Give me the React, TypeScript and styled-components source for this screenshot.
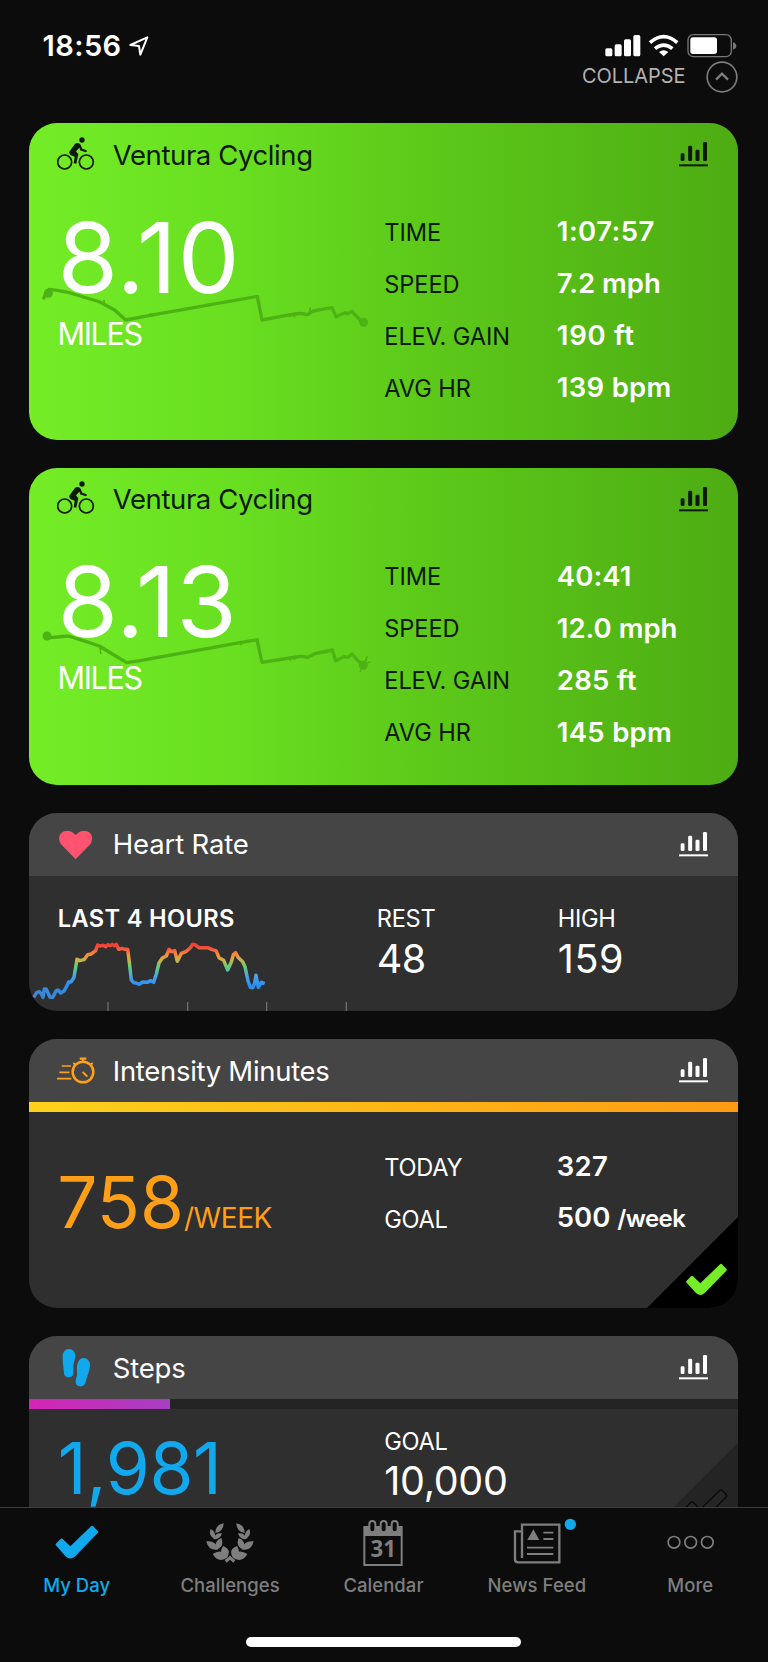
import React from 'react';
import styled, { createGlobalStyle } from 'styled-components';

const GlobalStyle = createGlobalStyle`
  * { box-sizing: border-box; }
  body {
    margin: 0;
    background: #0c0c0c;
    font-family: Inter, "Liberation Sans", sans-serif;
    color: #fff;
  }
`;

const Screen = styled.div`
  width: 768px;
  height: 1662px;
  display: flex;
  flex-direction: column;
  overflow: hidden;
  background: #0c0c0c;
`;

const StatusBar = styled.header`
  height: 61px;
  flex: none;
  display: flex;
  justify-content: space-between;
  align-items: flex-end;
  padding: 0 31px 0 42.5px;
`;

const Clock = styled.div`
  display: flex;
  align-items: center;
  gap: 7.5px;
  height: 31px;
  font-size: 29px;
  font-weight: 600;
  letter-spacing: 0.45px;
  line-height: 31px;
`;

const Indicators = styled.div`
  display: flex;
  height: 31px;
  align-items: center;
`;

const CollapseRow = styled.button`
  flex: none;
  height: 31px;
  display: flex;
  justify-content: flex-end;
  align-items: center;
  gap: 20px;
  padding: 0 30.5px 0 0;
  border: 0;
  background: none;
  color: #b2b2b2;
  font: 400 20px/31px Inter, "Liberation Sans", sans-serif;
  letter-spacing: -0.05px;
`;

const Feed = styled.main`
  flex: 1;
  min-height: 0;
  overflow: hidden;
  display: flex;
  flex-direction: column;
  gap: 28.2px;
  padding: 31px 29.6px 0 29.3px;
`;

const Card = styled.section<{ $height: number; $green?: boolean }>`
  position: relative;
  flex: none;
  height: ${(p) => p.$height}px;
  overflow: hidden;
  border-radius: 28px;
  background: ${(p) =>
    p.$green
      ? 'linear-gradient(90deg, #74ed27 0%, #68de20 30%, #5dca1a 55%, #4dac13 100%)'
      : '#2f2f2f'};
`;

const CardHeader = styled.div<{ $green?: boolean }>`
  height: 63px;
  display: flex;
  align-items: center;
  padding: 0 30px 0 27.5px;
  background: ${(p) => (p.$green ? 'transparent' : '#454545')};
  color: ${(p) => (p.$green ? '#0c1a06' : '#fff')};
`;

const IconSlot = styled.span`
  display: flex;
  width: 38px;
  height: 38px;
  margin-right: 18px;
`;

const Title = styled.h2<{ $track?: number }>`
  flex: 1;
  margin: 0;
  font-size: 27.5px;
  font-weight: 400;
  line-height: 40px;
  letter-spacing: ${(p) => p.$track ?? 0}px;
`;

const Body = styled.div<{ $top: number }>`
  display: grid;
  grid-template-columns: 355px 1fr;
  padding-top: ${(p) => p.$top}px;
`;

const Primary = styled.div<{ $top?: number; $left?: number }>`
  position: relative;
  padding: ${(p) => p.$top ?? 0}px 0 0 ${(p) => p.$left ?? 28}px;
  white-space: nowrap;
`;

const Distance = styled.div<{ $track: number }>`
  height: 98px;
  font-size: 98px;
  line-height: 98px;
  letter-spacing: ${(p) => p.$track}px;
`;

const Unit = styled.div`
  height: 54px;
  font-size: 30.5px;
  font-weight: 400;
  line-height: 54px;
  letter-spacing: -1.35px;
`;

const Total = styled.div<{ $color: string; $track: number }>`
  color: ${(p) => p.$color};
  font-size: 71px;
  line-height: 72px;
  height: 72px;
  letter-spacing: ${(p) => p.$track}px;
`;

const TotalUnit = styled.span`
  font-size: 28px;
  font-weight: 400;
  letter-spacing: -0.4px;
`;

const StatList = styled.dl`
  margin: 0;
`;

const Stat = styled.div`
  display: grid;
  grid-template-columns: 172.5px 1fr;
  height: 52px;
  align-items: center;
  white-space: nowrap;
`;

const Label = styled.dt<{ $dark?: boolean }>`
  padding-top: 1px;
  font-size: 23.6px;
  font-weight: 400;
  color: ${(p) => (p.$dark ? '#0b1a05' : '#fff')};
  letter-spacing: ${(p) => (p.$dark ? -0.1 : -0.3)}px;
  line-height: 28px;
`;

const Value = styled.dd<{ $track?: number }>`
  margin: -2px 0 0;
  font-size: 27.5px;
  font-weight: 600;
  line-height: 32px;
  letter-spacing: ${(p) => p.$track ?? 0}px;
`;

const Small = styled.span`
  font-size: 24px;
  letter-spacing: -0.6px;
`;

const HeartBody = styled.div`
  position: relative;
  display: grid;
  grid-template-columns: 347.5px 181px 1fr;
  padding-top: 29px;
`;

const Caption = styled.div<{ $bold?: boolean; $track?: number }>`
  font-size: 23.6px;
  font-weight: ${(p) => (p.$bold ? 600 : 400)};
  line-height: 28px;
  letter-spacing: ${(p) => p.$track ?? -0.3}px;
  padding-left: ${(p) => (p.$bold ? 28.5 : 0)}px;
`;

const Reading = styled.div<{ $track?: number; $top?: number }>`
  padding-top: ${(p) => p.$top ?? 1}px;
  font-size: 39.5px;
  line-height: 48px;
  height: 50px;
  letter-spacing: ${(p) => p.$track ?? 0}px;
`;

const Progress = styled.div`
  height: 9.5px;
  background: #242424;
`;

const ProgressFill = styled.div<{ $gradient: string; $percent: number }>`
  width: ${(p) => p.$percent}%;
  height: 100%;
  background: linear-gradient(90deg, ${(p) => p.$gradient});
`;

const Underlay = styled.svg<{ $top: number }>`
  position: absolute;
  left: -9.3px;
  top: ${(p) => p.$top}px;
`;

const Corner = styled.svg`
  position: absolute;
  right: 0;
  bottom: 0;
`;

const TabBar = styled.nav`
  position: relative;
  flex: none;
  height: 155px;
  border-top: 1px solid #3d3d3d;
  padding-right: 1px;
  display: grid;
  grid-template-columns: repeat(5, 1fr);
  background: #0c0c0c;
`;

const Tab = styled.div<{ $active?: boolean }>`
  display: flex;
  flex-direction: column;
  align-items: center;
  color: ${(p) => (p.$active ? '#10a9ee' : '#7e7e7e')};
  font-size: 18.5px;
  font-weight: 500;
  line-height: 24px;
  letter-spacing: 0.05px;
`;

const TabIcon = styled.svg`
  width: 64px;
  height: 55px;
  margin: 9px 0 1px;
  overflow: visible;
`;

const HomeIndicator = styled.div`
  position: absolute;
  left: 246px;
  bottom: 15.5px;
  width: 275px;
  height: 9.5px;
  border-radius: 5px;
  background: #fff;
`;

const ChartIcon = () => (
  <svg width="29.5" height="25" viewBox="0 0 88.5 75" fill="currentColor">
    <rect x="5" y="34" width="11.5" height="23" rx="4" />
    <rect x="27.5" y="11" width="12" height="46" rx="4" />
    <rect x="49.5" y="23" width="12" height="34" rx="4" />
    <rect x="72" y="0" width="12" height="57" rx="4" />
    <rect x="0" y="67" width="88.5" height="6" />
  </svg>
);

const CyclistIcon = () => (
  <svg width="38" height="38" viewBox="171 408 114 114" fill="none" stroke="currentColor">
    <circle cx="194" cy="486" r="21" strokeWidth="5" />
    <circle cx="259" cy="486" r="21" strokeWidth="5" />
    <circle cx="246" cy="420" r="8" fill="currentColor" stroke="none" />
    <path d="M232 434 L239 436 L244 449 L257 453" strokeWidth="7" strokeLinejoin="round" strokeLinecap="round" />
    <path d="M207 457 L224 433 Q231 426 239 431 L241 440 L228 454 L235 463 L229 491 L221 490 L224 470 L211 465 Z" fill="currentColor" stroke="none" />
  </svg>
);

const HeartIcon = () => (
  <svg width="38" height="38" viewBox="111 78 114 114">
    <path
      d="M167 181 L126 139 C115 128 115 111 124 102 C136 91 154 93 167 108 C180 93 198 91 210 102 C219 111 219 128 208 139 Z"
      fill="#ff5370"
    />
  </svg>
);

const StopwatchIcon = () => (
  <svg width="38" height="38" viewBox="111 67 114 114" fill="none" stroke="#ff9f1a">
    <circle cx="189" cy="127" r="31" strokeWidth="7.5" />
    <path d="M179 87 H199 M189 87 V97" strokeWidth="7" />
    <path d="M160 100 L168 107 M218 100 L210 107" strokeWidth="6" />
    <path d="M188 127 L202 141" strokeWidth="6" />
    <path d="M125 109 H153 M118 128 H148 M111 147 H154" strokeWidth="5" />
  </svg>
);

const StepsIcon = () => (
  <svg width="38" height="38" viewBox="111 71 114 114" fill="#12a8ee">
    <path d="M147 71 C158 71 166 80 166 92 C166 103 160 111 160 124 L160 144 C160 152 154 156 146 156 C138 156 133 152 132 144 C131 128 127 104 128 92 C129 79 137 71 147 71 Z" />
    <path d="M192 98 C203 99 211 109 210 121 C209 137 201 152 197 170 C195 180 188 184 180 183 C171 182 166 176 167 167 C168 156 173 151 171 140 C170 131 170 123 173 114 C176 103 183 98 192 98 Z" />
  </svg>
);

const checkPath =
  'M2 51 L15 38 Q18 35 21 38 L43 59 L102 2 Q105 -1 108 2 L121 15 Q124 18 121 21 L56 88 Q43 100 30 88 L2 57 Q-1 54 2 51 Z';

const GoalCorner = ({ reached }: { reached?: boolean }) => (
  <Corner width="91" height="91" viewBox="0 0 273 273">
    <path d="M0 273 L273 0 V273 Z" fill={reached ? '#000' : '#242424'} />
    <path
      d={checkPath}
      transform="translate(117 140)"
      fill={reached ? '#75ed28' : '#262626'}
      stroke={reached ? 'none' : '#080808'}
      strokeWidth="4"
    />
  </Corner>
);

const leaf = (x1: number, y1: number, x2: number, y2: number, w: number) => {
  const mx = (x1 + x2) / 2;
  const my = (y1 + y2) / 2;
  const len = Math.hypot(x2 - x1, y2 - y1);
  const nx = (-(y2 - y1) / len) * w;
  const ny = ((x2 - x1) / len) * w;
  return `M${x1} ${y1} Q${mx + nx} ${my + ny} ${x2} ${y2} Q${mx - nx} ${my - ny} ${x1} ${y1} Z`;
};

const branch = [
  leaf(588, 624, 613, 595, 16),
  leaf(585, 642, 574, 612, 14),
  leaf(582, 642, 608, 625, 14),
  leaf(596, 674, 561, 649, 20),
  leaf(592, 674, 606, 639, 19),
  leaf(625, 697, 580, 687, 25),
  leaf(623, 698, 611, 663, 23),
].join(' ');

const LaurelIcon = () => (
  <TabIcon viewBox="536 576 192 165" fill="currentColor">
    <path d={branch} />
    <path d={branch} transform="translate(1264 0) scale(-1 1)" />
    <path d="M632 691 L637 697 L648 705 L642 713 L632 704 L622 713 L616 705 L627 697 Z" />
  </TabIcon>
);

const CalendarIcon = () => (
  <TabIcon viewBox="992 576 192 165">
    <path
      d="M1029 603 H1147 V723 H1029 Z M1035 633 V717 H1141 V633 Z"
      fill="currentColor"
      fillRule="evenodd"
    />
    {[1056, 1090, 1123].map((x) => (
      <rect key={x} x={x - 9} y="588" width="18" height="34" rx="9" fill="#0c0c0c" stroke="currentColor" strokeWidth="6" />
    ))}
    <text
      x="1089"
      y="697"
      textAnchor="middle"
      fontFamily="Open Sans, sans-serif"
      fontWeight="700"
      fontSize="67"
      letterSpacing="0"
      fill="currentColor"
    >
      31
    </text>
  </TabIcon>
);

const NewsIcon = () => (
  <TabIcon viewBox="359 576 192 165" fill="none" stroke="currentColor" strokeWidth="7">
    <path d="M410 699 V599 H522 V712 H398 Q389 712 389 703 V619 H410" />
    <path d="M444 613 L462 645 H426 Z" fill="currentColor" stroke="none" />
    <path d="M474 623 H504 M474 642 H504 M425 668 H504 M425 687 H504" strokeWidth="5.5" />
    <circle cx="555" cy="598" r="17" fill="#10a9ee" stroke="none" />
  </TabIcon>
);

const MoreIcon = () => (
  <TabIcon viewBox="819 576 192 165" fill="none" stroke="currentColor" strokeWidth="5">
    <circle cx="867" cy="652" r="17.5" />
    <circle cx="917" cy="652" r="17.5" />
    <circle cx="967" cy="652" r="17.5" />
  </TabIcon>
);

interface Ride {
  distance: string;
  track: number;
  stats: [string, string, number][];
  route: string;
  start: [number, number];
  end: [number, number];
  spikes: string;
  underlayTop: number;
}

const rides: Ride[] = [
  {
    distance: '8.10',
    track: 0.7,
    underlayTop: 67,
    start: [85, 310],
    end: [1031, 397],
    route:
      'M70 328 L80 304 L88 298 L112 301 L145 307 L190 321 L240 336 L252 343 L285 361 L317 390 L390 376 L712 319 L726 390 L800 376 L826 372 L842 370 L862 374 L880 363 L905 358 L936 353 L948 380 L975 368 L984 371 L996 364 L1014 384 L1028 397',
    spikes: 'M252 330 L253 347 M808 370 L812 382 M820 368 L824 382 M871 352 L867 376 M390 370 L398 379 M283 355 L286 363',
    stats: [
      ['TIME', '1:07:57', 0.45],
      ['SPEED', '7.2 mph', 0],
      ['ELEV. GAIN', '190 ft', 0.7],
      ['AVG HR', '139 bpm', 0.3],
    ],
  },
  {
    distance: '8.13',
    track: 0.2,
    underlayTop: -8,
    start: [81, 528],
    end: [1030, 616],
    route:
      'M81 528 L92 533 L145 528 L190 542 L238 558 L262 573 L320 608 L360 602 L660 548 L711 539 L726 607 L790 597 L842 589 L864 592 L884 581 L910 576 L937 570 L947 602 L972 590 L984 592 L996 582 L1014 602 L1030 616',
    spikes: 'M240 556 L242 582 M808 591 L812 602 M820 590 L824 600 M663 545 L664 556 M1030 616 L1042 589 M1030 610 L1052 606 M1030 616 L1020 636',
    stats: [
      ['TIME', '40:41', 0.1],
      ['SPEED', '12.0 mph', 0],
      ['ELEV. GAIN', '285 ft', 0.25],
      ['AVG HR', '145 bpm', 0.3],
    ],
  },
];

const RideCard = ({ ride }: { ride: Ride }) => (
  <Card $green $height={316.8}>
    <Underlay $top={ride.underlayTop} width="364" height="330" viewBox="0 0 1092 990" fill="none" stroke="#4db213">
      <path d={ride.route} strokeWidth="10" strokeLinejoin="round" />
      <path d={ride.spikes} strokeWidth="5" />
      <circle cx={ride.start[0]} cy={ride.start[1]} r="13.5" fill="#4db213" stroke="none" />
      <circle cx={ride.end[0]} cy={ride.end[1]} r="13.5" fill="#4db213" stroke="none" />
    </Underlay>
    <CardHeader $green>
      <IconSlot><CyclistIcon /></IconSlot>
      <Title $track={-0.4}>Ventura Cycling</Title>
      <ChartIcon />
    </CardHeader>
    <Body $top={20}>
      <Primary $top={2.5} $left={28.2}>
        <Distance $track={ride.track}>{ride.distance}</Distance>
        <Unit>MILES</Unit>
      </Primary>
      <StatList>
        {ride.stats.map(([label, value, track]) => (
          <Stat key={label}>
            <Label $dark>{label}</Label>
            <Value $track={track}>{value}</Value>
          </Stat>
        ))}
      </StatList>
    </Body>
  </Card>
);

const heartLine =
  'M41 592 L50 578 L58 575 L64 581 L69 592 L73 567 L79 568 L90 592 L98 592 L108 573 L114 570 L122 579 L132 573 L140 559 L146 546 L153 546 L162 532 L166 508 L171 478 L179 482 L192 479 L203 464 L213 462 L227 452 L233 435 L240 438 L250 436 L257 440 L263 434 L271 437 L277 433 L283 437 L289 433 L296 448 L306 445 L316 448 L323 448 L326 470 L334 540 L341 548 L348 549 L358 553 L368 546 L382 547 L393 542 L401 547 L409 522 L417 489 L427 474 L439 468 L447 448 L455 455 L464 452 L472 484 L484 460 L499 454 L511 443 L518 433 L525 434 L537 443 L563 443 L577 449 L588 452 L597 473 L611 481 L623 510 L634 486 L640 464 L647 458 L654 472 L668 485 L675 500 L684 543 L691 562 L698 563 L704 550 L708 526 L715 562 L724 547 L734 551';

export default function App() {
  return (
    <>
      <GlobalStyle />
      <Screen>
        <StatusBar>
          <Clock>
            18:56
            <svg width="20" height="20" viewBox="387 107 60 60" fill="none" stroke="#fff" strokeWidth="6" strokeLinejoin="round">
              <path d="M391 134 L442 111 L421 163 L417 137 Z" />
            </svg>
          </Clock>
          <Indicators>
            <svg width="132" height="24" viewBox="662 101 396 72">
              <g fill="#fff">
                <rect x="663" y="144" width="21" height="24" rx="5" />
                <rect x="691" y="132" width="21" height="36" rx="5" />
                <rect x="719" y="117" width="21" height="51" rx="5" />
                <rect x="747" y="104" width="21" height="64" rx="5" />
                <path d="M838 168 L824 155 Q838 145 852 155 Z" />
              </g>
              <path d="M812 145 Q838 124 864 145" fill="none" stroke="#fff" strokeWidth="11" />
              <path d="M797 127 Q838 91 879 127" fill="none" stroke="#fff" strokeWidth="11" />
              <rect x="911" y="103" width="130" height="66" rx="16" fill="none" stroke="#777" strokeWidth="4" />
              <rect x="918" y="111" width="80" height="50" rx="8" fill="#fff" />
              <path d="M1046 126 Q1056 129 1056 137 Q1056 145 1046 148 Z" fill="#777" />
            </svg>
          </Indicators>
        </StatusBar>
        <CollapseRow>
          COLLAPSE
          <svg width="32" height="32" viewBox="0 0 96 96" fill="none" stroke="#7d7d7d">
            <circle cx="48" cy="48" r="44.5" strokeWidth="5" />
            <path d="M30 56 L48 38 L66 56" strokeWidth="7" />
          </svg>
        </CollapseRow>
        <Feed>
          {rides.map((ride) => (
            <RideCard key={ride.distance} ride={ride} />
          ))}

          <Card $height={198.2}>
            <Underlay $top={-13} width="364" height="220" viewBox="0 0 1092 660" fill="none">
              <defs>
                <linearGradient id="zones" gradientUnits="userSpaceOnUse" x1="0" x2="0" y1="430" y2="595">
                  <stop offset="0" stopColor="#f23a38" />
                  <stop offset="0.08" stopColor="#f2503a" />
                  <stop offset="0.2" stopColor="#f58a3c" />
                  <stop offset="0.3" stopColor="#cdb04a" />
                  <stop offset="0.43" stopColor="#5fd07c" />
                  <stop offset="0.6" stopColor="#4da3e6" />
                  <stop offset="0.75" stopColor="#2d8ff0" />
                  <stop offset="1" stopColor="#3f86cc" />
                </linearGradient>
              </defs>
              <path d={heartLine} stroke="url(#zones)" strokeWidth="10.5" strokeLinejoin="round" />
              <path d="M264 606 V634 M503 606 V634 M740 606 V634 M979 606 V634" stroke="#6d6d6d" strokeWidth="4" />
            </Underlay>
            <CardHeader>
              <IconSlot><HeartIcon /></IconSlot>
              <Title $track={-0.15}>Heart Rate</Title>
              <ChartIcon />
            </CardHeader>
            <HeartBody>
              <Caption $bold $track={0.35}>LAST 4 HOURS</Caption>
              <div>
                <Caption>REST</Caption>
                <Reading $top={2.5} $track={-0.5}>48</Reading>
              </div>
              <div>
                <Caption>HIGH</Caption>
                <Reading $top={2.5} $track={0.6}>159</Reading>
              </div>
            </HeartBody>
          </Card>

          <Card $height={268.8}>
            <CardHeader>
              <IconSlot><StopwatchIcon /></IconSlot>
              <Title $track={-0.3}>Intensity Minutes</Title>
              <ChartIcon />
            </CardHeader>
            <Progress>
              <ProgressFill $percent={100} $gradient="#fbd21c, #fdb917 45%, #ff9b13" />
            </Progress>
            <Body $top={29.5}>
              <Primary $top={24.5}>
                <Total $color="#ff9f17" $track={0}>
                  758<TotalUnit>/WEEK</TotalUnit>
                </Total>
              </Primary>
              <StatList>
                <Stat>
                  <Label>TODAY</Label>
                  <Value $track={0.3}>327</Value>
                </Stat>
                <Stat>
                  <Label>GOAL</Label>
                  <Value>500 <Small>/week</Small></Value>
                </Stat>
              </StatList>
            </Body>
            <GoalCorner reached />
          </Card>

          <Card $height={198}>
            <CardHeader>
              <IconSlot><StepsIcon /></IconSlot>
              <Title $track={-0.2}>Steps</Title>
              <ChartIcon />
            </CardHeader>
            <Progress>
              <ProgressFill $percent={19.81} $gradient="#d425b6, #a73fc0" />
            </Progress>
            <Body $top={19}>
              <Primary $top={4.5} $left={28.5}>
                <Total $color="#12a8ee" $track={-0.4}>1,981</Total>
              </Primary>
              <div>
                <Caption>GOAL</Caption>
                <Reading $track={-0.3}>10,000</Reading>
              </div>
            </Body>
            <GoalCorner />
          </Card>
        </Feed>
        <TabBar>
          <Tab $active>
            <TabIcon viewBox="-31 -26 192 165" fill="currentColor">
              <path d={checkPath} transform="scale(1.05)" />
            </TabIcon>
            My Day
          </Tab>
          <Tab><LaurelIcon />Challenges</Tab>
          <Tab><CalendarIcon />Calendar</Tab>
          <Tab><NewsIcon />News Feed</Tab>
          <Tab><MoreIcon />More</Tab>
          <HomeIndicator />
        </TabBar>
      </Screen>
    </>
  );
}
